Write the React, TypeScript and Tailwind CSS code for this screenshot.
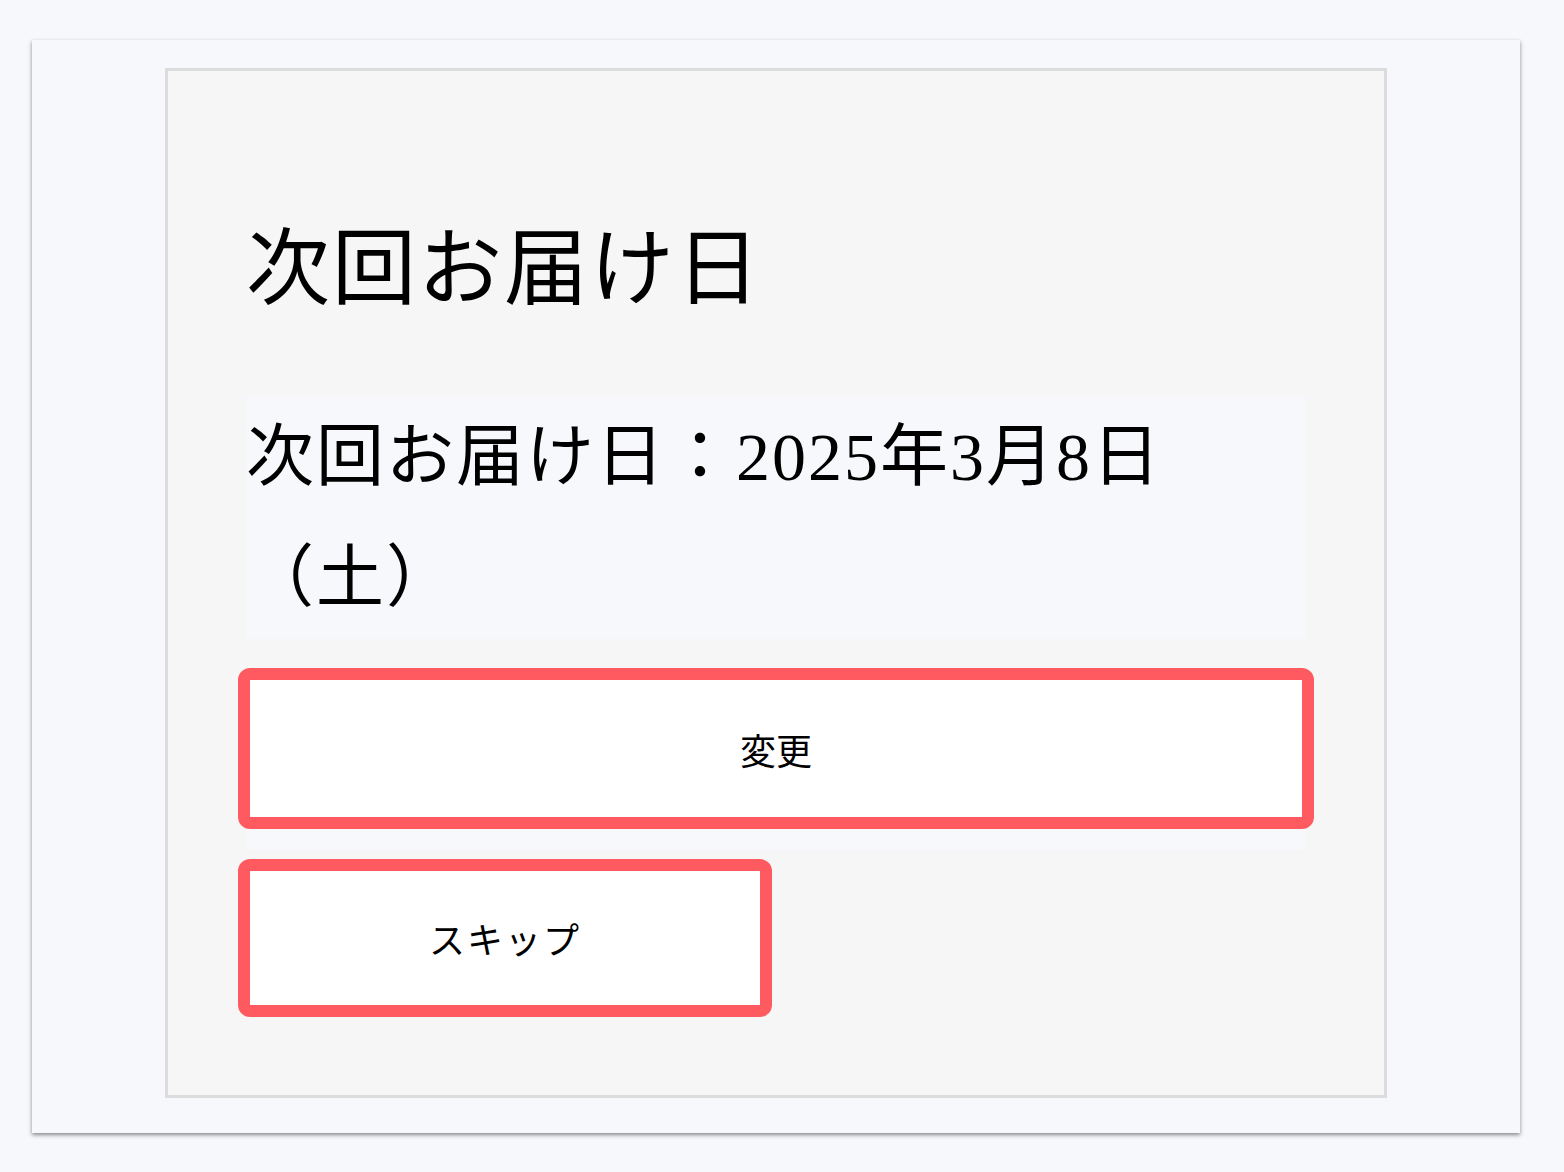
export default function App() {
  return (
    <div className="min-h-screen bg-[#f7f8fb] pl-8 pr-[44px] pt-10 pb-10">
      <div className="flex justify-center bg-[#f7f8fb] pt-[28px] pb-[35px] shadow-[0_2px_4px_rgba(0,0,0,0.45)]">
        <div className="w-[1222px] border-[3px] border-[#dcdcdc] bg-[#f6f6f6] px-[78px] pt-[149px] pb-[78px]">
          <h1
            className="text-[84px] leading-none font-normal tracking-[2px] text-black"
            style={{ fontFamily: '"Noto Sans CJK JP", sans-serif' }}
          >
            次回お届け日
          </h1>

          <div className="mt-[93px] bg-[#f7f8fb]">
            <p
              className="text-[68px] leading-[121px] tracking-[2px] text-black"
              style={{ fontFamily: '"Liberation Serif", "Noto Sans CJK JP", serif' }}
            >
              次回お届け日：2025年3月8日（土）
            </p>
          </div>

          <div className="mt-[29px] bg-[#f7f8fb] pb-[21px]">
            <button
              className="-mx-2 flex h-[161px] w-[calc(100%+16px)] items-center justify-center rounded-[12px] border-[12px] border-[#ff5a5f] bg-white text-[36px] text-black"
              style={{ fontFamily: '"Noto Sans CJK JP", sans-serif' }}
            >
              変更
            </button>
          </div>

          <button
            className="-mx-2 mt-[9px] flex h-[158px] w-[534px] items-center justify-center rounded-[12px] border-[12px] border-[#ff5a5f] bg-white text-[36px] tracking-[2px] text-black"
            style={{ fontFamily: '"Noto Sans CJK JP", sans-serif' }}
          >
            スキップ
          </button>
        </div>
      </div>
    </div>
  )
}
